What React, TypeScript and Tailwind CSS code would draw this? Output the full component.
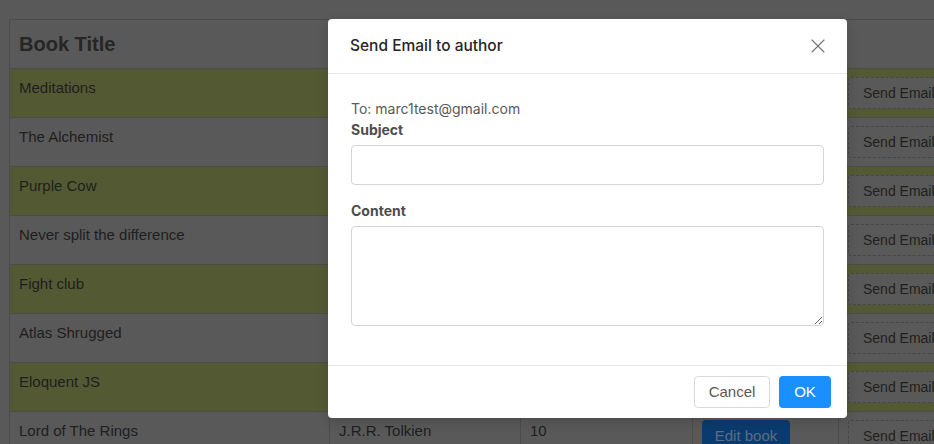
import { X } from 'lucide-react';

interface Book {
  title: string;
  author: string;
  count: number;
}

const books: Book[] = [
  { title: 'Meditations', author: 'Marcus Aurelius', count: 4 },
  { title: 'The Alchemist', author: 'Paulo Coelho', count: 7 },
  { title: 'Purple Cow', author: 'Seth Godin', count: 3 },
  { title: 'Never split the difference', author: 'Chris Voss', count: 5 },
  { title: 'Fight club', author: 'Chuck Palahniuk', count: 2 },
  { title: 'Atlas Shrugged', author: 'Ayn Rand', count: 6 },
  { title: 'Eloquent JS', author: 'Marijn Haverbeke', count: 8 },
  { title: 'Lord of The Rings', author: 'J.R.R. Tolkien', count: 10 },
];

const rowGrid = 'grid grid-cols-[320px_191px_172px_146px_160px] h-[49px] border-b border-[#4c4c4c]';
const cell = 'border-r border-[#4c4c4c] px-[9px] pt-[8px]';

const App = () => {
  return (
    <div
      className="relative h-[444px] w-[934px] overflow-hidden bg-[#595959] pt-[19px] pl-[9px]"
      style={{ fontFamily: '"Liberation Sans", Arial, sans-serif' }}
    >
      {/* Table under the mask */}
      <div className="w-[1000px] border-t border-l border-[#4c4c4c] text-[15px] leading-[22px] text-[#1e1e1e]">
        <div className={rowGrid}>
          <div className="border-r border-[#4c4c4c] px-[9px] pt-[12px] text-[20px] font-bold leading-[24px] text-[#262626]">
            Book Title
          </div>
          <div className={cell}></div>
          <div className={cell}></div>
          <div className={cell}></div>
          <div className={cell}></div>
        </div>

        {books.map((book, i) => (
          <div key={book.title} className={`${rowGrid} ${i % 2 === 0 ? 'bg-[#535a33]' : 'bg-[#595959]'}`}>
            <div className={cell}>{book.title}</div>
            <div className={cell}>{book.author}</div>
            <div className={cell}>{book.count}</div>
            <div className={cell}>
              <button className="h-[32px] w-[88px] rounded-[4px] bg-[#0b3b6e] text-[15px] text-[#5b6d84]">
                Edit book
              </button>
            </div>
            <div className={cell}>
              <button className="h-[32px] w-[120px] whitespace-nowrap rounded-[3px] border border-dashed border-[#474747] bg-[#595959] px-[14px] text-left text-[14px] text-[#1f1f1f]">
                Send Email
              </button>
            </div>
          </div>
        ))}
      </div>

      {/* Modal */}
      <div
        className="absolute left-[328px] top-[19px] w-[519px] rounded-[4px] bg-white shadow-[0_4px_12px_rgba(0,0,0,0.15)]"
        style={{ fontFamily: 'Inter, "Noto Sans", sans-serif' }}
      >
        <div className="relative border-b border-[#e8e8e8] px-[22px] py-4">
          <div className="text-[15.5px] font-medium leading-[22px] text-[#262626]">Send Email to author</div>
          <button className="absolute right-0 top-0 flex h-[54px] w-[58px] items-center justify-center text-[#737373]">
            <X className="h-[24px] w-[24px]" strokeWidth={1.1} />
          </button>
        </div>

        <div className="px-[23px] pt-6 pb-[39px] text-[14px] leading-[21px] text-[#595959]">
          <div>To: marc1test@gmail.com</div>
          <div className="font-bold text-[#4d4d4d]">Subject</div>
          <input
            type="text"
            className="mt-[5px] block h-[40px] w-full rounded-[4px] border border-[#d4d4d4] px-3 outline-none"
          />
          <div className="mt-[15px] font-bold text-[#4d4d4d]">Content</div>
          <textarea className="mt-[5px] block h-[100px] w-full rounded-[4px] border border-[#d4d4d4] px-3 py-1 outline-none" />
        </div>

        <div
          className="flex justify-end gap-[9px] border-t border-[#e8e8e8] px-4 py-[10px]"
          style={{ fontFamily: '"Liberation Sans", Arial, sans-serif' }}
        >
          <button className="h-[32px] w-[76px] rounded-[4px] border border-[#d9d9d9] bg-white text-[15px] text-[#595959]">
            Cancel
          </button>
          <button className="h-[32px] w-[52px] rounded-[4px] bg-[#1890ff] text-[15px] text-white">OK</button>
        </div>
      </div>
    </div>
  );
};

export default App;
